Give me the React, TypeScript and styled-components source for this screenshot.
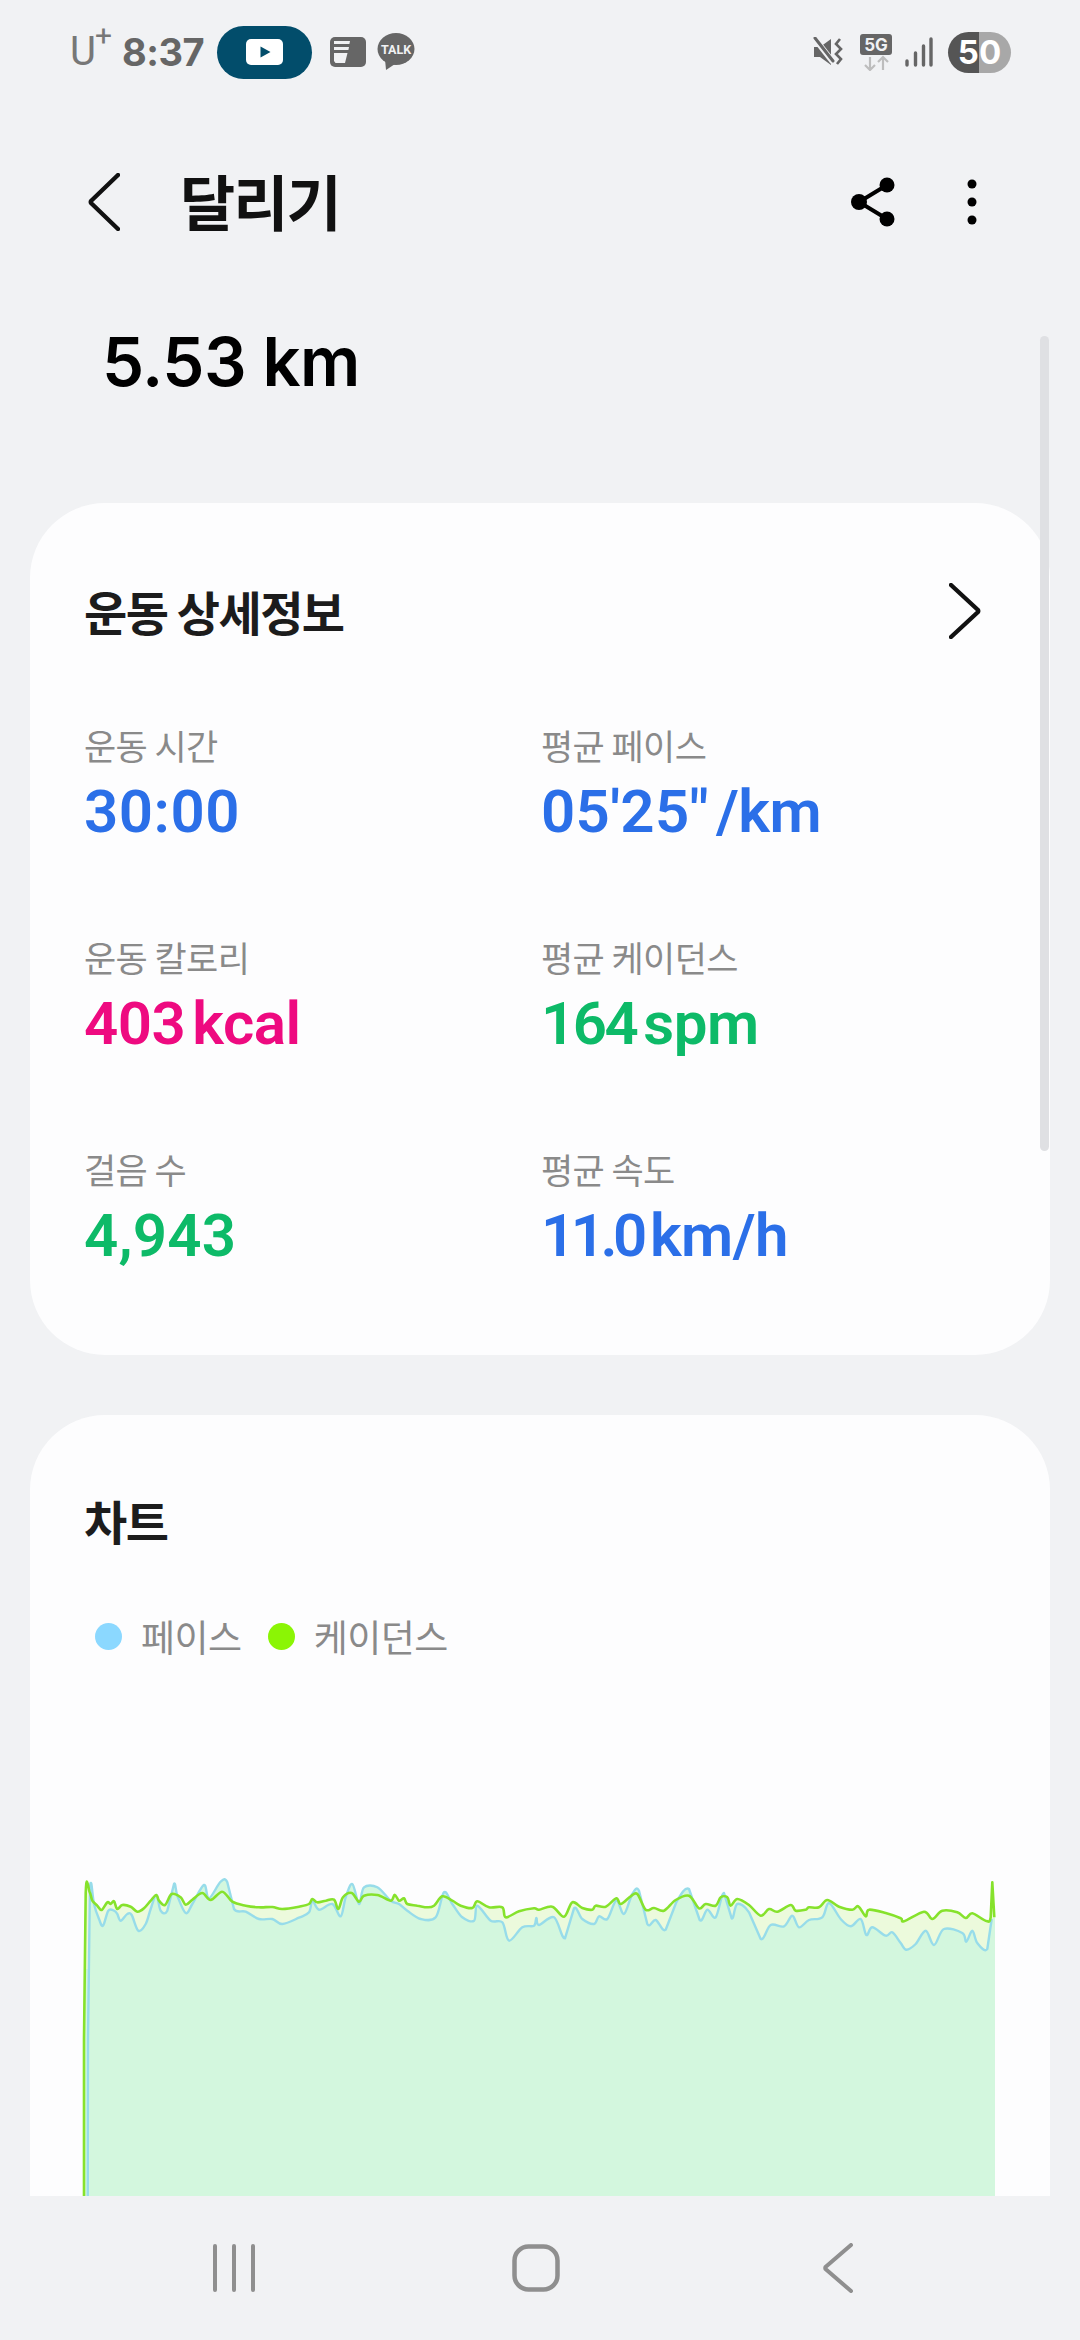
import styled, { createGlobalStyle } from "styled-components"

const KR = `"Noto Sans CJK KR", "Noto Sans", sans-serif`
const NUM = `Inter, "Noto Sans CJK KR", sans-serif`

const GlobalStyle = createGlobalStyle`
  html, body {
    margin: 0;
    padding: 0;
    background: #f1f2f4;
  }
  * {
    box-sizing: border-box;
  }
`

const Page = styled.div`
  width: 1080px;
  height: 2340px;
  display: flex;
  flex-direction: column;
  overflow: hidden;
  background: #f1f2f4;
  font-family: ${KR};
`

const StatusBar = styled.div`
  height: 104px;
  flex: none;
  padding: 0 69px 0 70px;
  display: flex;
  align-items: center;
  justify-content: space-between;
  color: #666666;
`

const StatusGroup = styled.div`
  display: flex;
  align-items: center;
`

const Carrier = styled.span`
  font: 400 40px/1 Roboto, sans-serif;
  letter-spacing: -1px;
  color: #777777;
  display: flex;
  align-items: flex-start;
  margin-right: 11px;
  sup {
    font-size: 30px;
    line-height: 1;
    margin: -11px 0 0 0;
    vertical-align: baseline;
  }
`

const Clock = styled.span`
  font: 700 38px/1 Inter, sans-serif;
  letter-spacing: -0.5px;
  color: #666666;
  margin-right: 13px;
`

const MediaPill = styled.div`
  width: 95px;
  height: 53px;
  border-radius: 27px;
  background: #024d6b;
  display: flex;
  align-items: center;
  justify-content: center;
  margin-right: 18px;
`

const Battery = styled.div`
  width: 63px;
  height: 41px;
  border-radius: 21px;
  overflow: hidden;
  background: linear-gradient(90deg, #555555 50%, #a8a8a8 50%);
  color: #ffffff;
  font: 700 33px/41px Inter, sans-serif;
  text-align: center;
  margin-left: 15px;
`

const NetworkIcon = styled.svg`
  margin: 0 13px 0 17px;
`

const Header = styled.header`
  height: 196px;
  flex: none;
  padding: 0 102px 0 88px;
  display: flex;
  align-items: center;
`

const PageTitle = styled.h1`
  margin: -5px 0 0 60px;
  flex: 1;
  font: 700 60px/1 ${KR};
  letter-spacing: -2px;
  color: #111111;
`

const HeaderActions = styled.div`
  display: flex;
  align-items: center;
  gap: 70px;
`

const Content = styled.main`
  position: relative;
  flex: 1;
  min-height: 0;
  overflow: hidden;
`

const Scrollbar = styled.div`
  position: absolute;
  top: 36px;
  right: 31px;
  width: 9px;
  height: 815px;
  border-radius: 5px;
  background: #dfe0e3;
`

const Distance = styled.div`
  height: 124px;
  padding-left: 102px;
  margin-bottom: 79px;
  font: 600 67px/124px ${NUM};
  letter-spacing: -0.5px;
  color: #000000;
`

const Card = styled.section<{ $top: number }>`
  margin: 0 30px 60px;
  padding: ${({ $top }) => $top}px 54px 0;
  border-radius: 75px;
  background: #fdfdfe;
`

const SummaryCard = styled(Card)`
  height: 852px;
`

const ChartCard = styled(Card)`
  height: 1000px;
`

const CardHeader = styled.div`
  height: 72px;
  display: flex;
  align-items: center;
  justify-content: space-between;
  padding-right: 15px;
`

const CardTitle = styled.h2`
  margin: 0;
  font: 700 47px/72px ${KR};
  letter-spacing: -1.5px;
  color: #1c1c1c;
`

const MetricGrid = styled.div`
  margin-top: 74px;
  display: grid;
  grid-template-columns: 457px 1fr;
  row-gap: 85px;
`

const Metric = styled.div`
  display: flex;
  flex-direction: column;
  gap: 7px;
`

const MetricLabel = styled.span`
  font: 400 35px/48px ${KR};
  letter-spacing: -0.6px;
  color: #8a8a8a;
`

const MetricValue = styled.span<{ $color: string; $tight: number }>`
  font: 600 60px/72px Roboto, sans-serif;
  letter-spacing: ${({ $tight }) => $tight}px;
  color: ${({ $color }) => $color};
  small {
    font-size: inherit;
    letter-spacing: -0.5px;
    margin-left: 7px;
  }
`

const Legend = styled.div`
  margin: 56px 0 0 11px;
  height: 48px;
  display: flex;
  align-items: center;
`

const LegendDot = styled.span<{ $color: string }>`
  width: 27px;
  height: 27px;
  border-radius: 50%;
  background: ${({ $color }) => $color};
  margin-right: 19px;
`

const LegendText = styled.span`
  font: 400 37px/48px ${KR};
  letter-spacing: -0.5px;
  color: #8a8a8a;
  margin-right: 26px;
`

const Chart = styled.svg`
  display: block;
  margin: 179px 0 0 -1px;
  overflow: visible;
`

const NavBar = styled.nav`
  height: 144px;
  flex: none;
  display: grid;
  grid-template-columns: repeat(3, 302px);
  justify-content: center;
  align-items: center;
  justify-items: center;
  padding: 0 8px 1px 0;
`

// chart points read off the reference, in px from x=60 / y=1840 at 3x
const greenLeft = [
  75, 1200, 75, 600, 80, 162, 92, 160, 100, 185, 115, 200, 128, 213, 145, 190, 155, 195, 165, 187, 175, 210, 190, 198,
  215, 203, 235, 218, 255, 208, 275, 185, 292, 168, 300, 185, 318, 198, 338, 165, 365, 175, 380, 197, 400, 182, 430,
  162, 455, 183, 490, 158, 520, 188, 560, 200, 600, 205, 640, 204, 670, 210, 720, 203, 750, 195, 760, 180, 775, 190,
  800, 185, 825, 182, 838, 210, 852, 175, 878, 162, 900, 188, 915, 170, 955, 168, 995, 185, 1007, 167, 1020, 185, 1035,
  178, 1045, 195, 1075, 200, 1105, 205, 1125, 200, 1150, 172, 1180, 185, 1205, 200, 1240, 207, 1255, 187, 1290, 205,
  1330, 205, 1340, 235, 1380, 217, 1425, 208,
]
const greenRight = [
  0, 212, 40, 203, 75, 233, 100, 190, 130, 207, 160, 212, 170, 200, 200, 203, 232, 178, 245, 195, 275, 172, 295, 165,
  320, 212, 345, 207, 375, 215, 410, 183, 450, 170, 480, 208, 500, 195, 530, 200, 545, 175, 565, 175, 575, 200, 595,
  180, 630, 198, 665, 230, 690, 210, 715, 218, 755, 198, 770, 215, 800, 212, 810, 205, 840, 205, 865, 183, 900, 203,
  940, 212, 958, 202, 980, 232, 990, 212, 1040, 222, 1085, 238, 1095, 247, 1155, 218, 1180, 240, 1210, 215, 1255, 220,
  1280, 237, 1300, 223, 1340, 245, 1355, 235, 1360, 130, 1366, 235,
]
const blueLeft = [
  86, 1200, 87, 600, 92, 200, 96, 132, 105, 195, 120, 240, 132, 260, 148, 215, 165, 215, 175, 225, 185, 245, 205, 225,
  218, 228, 238, 275, 260, 255, 275, 210, 292, 168, 305, 215, 325, 215, 345, 135, 355, 170, 380, 222, 400, 195, 435,
  138, 450, 178, 485, 128, 505, 130, 525, 210, 560, 218, 600, 240, 640, 240, 670, 255, 720, 236, 750, 220, 760, 185,
  780, 212, 820, 195, 845, 232, 860, 175, 880, 135, 900, 195, 915, 145, 955, 145, 995, 185, 1020, 195, 1045, 215, 1085,
  240, 1130, 235, 1155, 160, 1180, 195, 1210, 235, 1245, 245, 1255, 200, 1295, 245, 1330, 250, 1350, 305, 1390, 265,
  1425, 260, 1432, 237,
]
const blueRight = [
  0, 258, 45, 235, 78, 298, 105, 208, 130, 240, 165, 255, 180, 232, 205, 240, 232, 185, 255, 225, 280, 165, 300, 155,
  325, 255, 350, 243, 380, 272, 412, 190, 450, 150, 482, 243, 505, 212, 530, 235, 555, 162, 578, 238, 595, 195, 630,
  220, 665, 300, 695, 258, 735, 262, 760, 230, 780, 265, 810, 243, 850, 235, 870, 192, 905, 240, 935, 262, 965, 240,
  982, 288, 1000, 265, 1040, 290, 1060, 280, 1085, 312, 1102, 332, 1130, 315, 1160, 275, 1185, 318, 1215, 270, 1270,
  282, 1282, 308, 1300, 275, 1315, 312, 1345, 330, 1358, 240,
]

type Pt = [number, number]

const toPoints = (left: number[], right: number[]) => {
  const pts: Pt[] = []
  for (let i = 0; i < left.length; i += 2) pts.push([60 + left[i] / 3 - 84, left[i + 1] / 3])
  for (let i = 0; i < right.length; i += 2) pts.push([540 + right[i] / 3 - 84, right[i + 1] / 3])
  return pts
}

// smooth the line a little, the app draws a curve through its samples
const smooth = (pts: Pt[]) => {
  let d = `M${pts[0][0].toFixed(1)} ${pts[0][1].toFixed(1)}`
  for (let i = 0; i < pts.length - 1; i++) {
    const p0 = pts[Math.max(i - 1, 0)]
    const p1 = pts[i]
    const p2 = pts[i + 1]
    const p3 = pts[Math.min(i + 2, pts.length - 1)]
    const tall = Math.abs(p2[1] - p1[1]) > 25
    const k = tall ? 0 : 1 / 6
    const c1x = p1[0] + (p2[0] - p0[0]) * k
    const c1y = p1[1] + (p2[1] - p0[1]) * k
    const c2x = p2[0] - (p3[0] - p1[0]) * k
    const c2y = p2[1] - (p3[1] - p1[1]) * k
    d += ` C${c1x.toFixed(1)} ${c1y.toFixed(1)} ${c2x.toFixed(1)} ${c2y.toFixed(1)} ${p2[0].toFixed(1)} ${p2[1].toFixed(1)}`
  }
  return d
}

const greenLine = smooth(toPoints(greenLeft, greenRight))
const blueLine = smooth(toPoints(blueLeft, blueRight))

// tight: the figure 1 is narrower in the original face than in Roboto
const metrics = [
  { label: "운동 시간", value: "30:00", tight: 0.5, color: "#2b6fe8" },
  { label: "평균 페이스", value: "05'25\"", unit: "/km", tight: 0.3, color: "#2b6fe8" },
  { label: "운동 칼로리", value: "403", unit: "kcal", tight: -0.5, color: "#ee0a80" },
  { label: "평균 케이던스", value: "164", unit: "spm", tight: -2.5, color: "#0dba68" },
  { label: "걸음 수", value: "4,943", tight: 0.2, color: "#0dba68" },
  { label: "평균 속도", value: "11.0", unit: "km/h", tight: -4.5, color: "#2b6fe8" },
]

const YoutubeIcon = () => (
  <svg width="37" height="26" viewBox="0 0 37 26">
    <rect width="37" height="26" rx="5" fill="#ffffff" />
    <path d="M14.500 7.500 L24.500 13 L14.500 18.500 Z" fill="#024d6b" />
  </svg>
)

const NewsIcon = () => (
  <svg width="36" height="30" viewBox="0 0 36 30" style={{ marginRight: 11 }}>
    <rect width="36" height="30" rx="5" fill="#666666" />
    <path d="M4 4 H20 L19.400 7 H4 Z M4 10 H19 L18.400 13 H4 Z" fill="#f1f2f4" />
    <path d="M4 16 H17.500 L15 26 H5.500 L4 24 Z" fill="#f1f2f4" />
  </svg>
)

const TalkIcon = () => (
  <svg width="38" height="38" viewBox="0 0 38 38">
    <ellipse cx="19" cy="16" rx="18.500" ry="16" fill="#666666" />
    <path d="M8 26 L9 37 L18 31 Z" fill="#666666" />
    <text x="19" y="20.500" textAnchor="middle" fontFamily="Roboto, sans-serif" fontSize="12.500" fontWeight="700" fill="#f1f2f4">
      TALK
    </text>
  </svg>
)

const MuteIcon = () => (
  <svg width="30" height="30" viewBox="0 0 30 30">
    <path d="M1 10 H7 L18 2 V28 L7 20 H1 Z" fill="#666666" />
    <path d="M2 2 L20 25" stroke="#f1f2f4" strokeWidth="6" />
    <path d="M2 1 L20 24" stroke="#666666" strokeWidth="3" strokeLinecap="round" />
    <path d="M27 2 L23 7 L28 12 L23 17 L28 22 L24 27" fill="none" stroke="#666666" strokeWidth="2.600" />
  </svg>
)

const FiveGIcon = () => (
  <NetworkIcon width="32" height="37" viewBox="0 0 32 37">
    <rect width="32" height="21" rx="3" fill="#666666" />
    <text x="16" y="17" textAnchor="middle" fontFamily="Inter, sans-serif" fontSize="17" fontWeight="700" fill="#f1f2f4">
      5G
    </text>
    <path d="M10 23 V36 M5 31 L10 36 L15 31" fill="none" stroke="#bdbdbd" strokeWidth="2.200" />
    <path d="M23 36 V23 M18 28 L23 23 L28 28" fill="none" stroke="#bdbdbd" strokeWidth="2.200" />
  </NetworkIcon>
)

const SignalIcon = () => (
  <svg width="28" height="30" viewBox="0 0 28 30">
    <path d="M2 24 V28 M10.500 16 V28 M18.500 9 V28 M26 2 V28" stroke="#666666" strokeWidth="3.400" strokeLinecap="round" />
  </svg>
)

const BackIcon = () => (
  <svg width="32" height="58" viewBox="0 0 32 58">
    <path d="M30 2 L3 28 Q2.500 29 3 30 L30 56" fill="none" stroke="#111111" strokeWidth="4.400" strokeLinecap="round" />
  </svg>
)

const ShareIcon = () => (
  <svg width="46" height="50" viewBox="0 0 46 50">
    <path d="M37 8 L9 25 L37 42" fill="none" stroke="#000000" strokeWidth="4" />
    <circle cx="37" cy="8" r="7.500" fill="#000000" />
    <circle cx="9" cy="25" r="8" fill="#000000" />
    <circle cx="37" cy="42" r="7.500" fill="#000000" />
  </svg>
)

const MoreIcon = () => (
  <svg width="12" height="46" viewBox="0 0 12 46">
    <circle cx="6" cy="5" r="4.500" fill="#000000" />
    <circle cx="6" cy="23" r="4.500" fill="#000000" />
    <circle cx="6" cy="41" r="4.500" fill="#000000" />
  </svg>
)

const ChevronRight = () => (
  <svg width="32" height="56" viewBox="0 0 32 56">
    <path d="M2 2 L29 27 Q29.500 28 29 29 L2 54" fill="none" stroke="#111111" strokeWidth="4.400" strokeLinecap="round" />
  </svg>
)

const RecentsIcon = () => (
  <svg width="44" height="48" viewBox="0 0 44 48">
    <path d="M3 2 V46 M22 2 V46 M41 2 V46" stroke="#8f8f8f" strokeWidth="4" strokeLinecap="round" />
  </svg>
)

const HomeIcon = () => (
  <svg width="48" height="48" viewBox="0 0 48 48">
    <rect x="2.500" y="2.500" width="43" height="43" rx="14" fill="none" stroke="#8f8f8f" strokeWidth="4.500" />
  </svg>
)

const NavBackIcon = () => (
  <svg width="32" height="50" viewBox="0 0 32 50">
    <path d="M29 2 L3.500 24 Q3 25 3.500 26 L29 48" fill="none" stroke="#8f8f8f" strokeWidth="4" strokeLinecap="round" />
  </svg>
)

const App = () => (
  <Page>
    <GlobalStyle />
    <StatusBar>
      <StatusGroup>
        <Carrier>
          U<sup>+</sup>
        </Carrier>
        <Clock>8:37</Clock>
        <MediaPill>
          <YoutubeIcon />
        </MediaPill>
        <NewsIcon />
        <TalkIcon />
      </StatusGroup>
      <StatusGroup>
        <MuteIcon />
        <FiveGIcon />
        <SignalIcon />
        <Battery>50</Battery>
      </StatusGroup>
    </StatusBar>

    <Header>
      <BackIcon />
      <PageTitle>달리기</PageTitle>
      <HeaderActions>
        <ShareIcon />
        <MoreIcon />
      </HeaderActions>
    </Header>

    <Content>
      <Scrollbar />
      <Distance>5.53 km</Distance>

      <SummaryCard $top={72}>
        <CardHeader>
          <CardTitle>운동 상세정보</CardTitle>
          <ChevronRight />
        </CardHeader>
        <MetricGrid>
          {metrics.map((m) => (
            <Metric key={m.label}>
              <MetricLabel>{m.label}</MetricLabel>
              <MetricValue $color={m.color} $tight={m.tight}>
                {m.value}
                {m.unit && <small>{m.unit}</small>}
              </MetricValue>
            </Metric>
          ))}
        </MetricGrid>
      </SummaryCard>

      <ChartCard $top={69}>
        <CardHeader>
          <CardTitle>차트</CardTitle>
        </CardHeader>
        <Legend>
          <LegendDot $color="#8bd8ff" />
          <LegendText>페이스</LegendText>
          <LegendDot $color="#8bf505" />
          <LegendText>케이던스</LegendText>
        </Legend>
        <Chart width="912" height="400" viewBox="0 0 912 400">
          <path d={`${greenLine} L912 400 L1 400 Z`} fill="#ecfadc" />
          <path d={`${blueLine} L912 78 L912 400 L5 400 Z`} fill="#d3f7de" />
          <path d="M1 130 H9 V400 H1 Z" fill="#d3f7de" />
          <path d={blueLine} fill="none" stroke="#97dcea" strokeWidth="2.400" strokeLinejoin="round" />
          <path d={greenLine} fill="none" stroke="#86e22c" strokeWidth="2.600" strokeLinejoin="round" />
        </Chart>
      </ChartCard>
    </Content>

    <NavBar>
      <RecentsIcon />
      <HomeIcon />
      <NavBackIcon />
    </NavBar>
  </Page>
)

export default App
